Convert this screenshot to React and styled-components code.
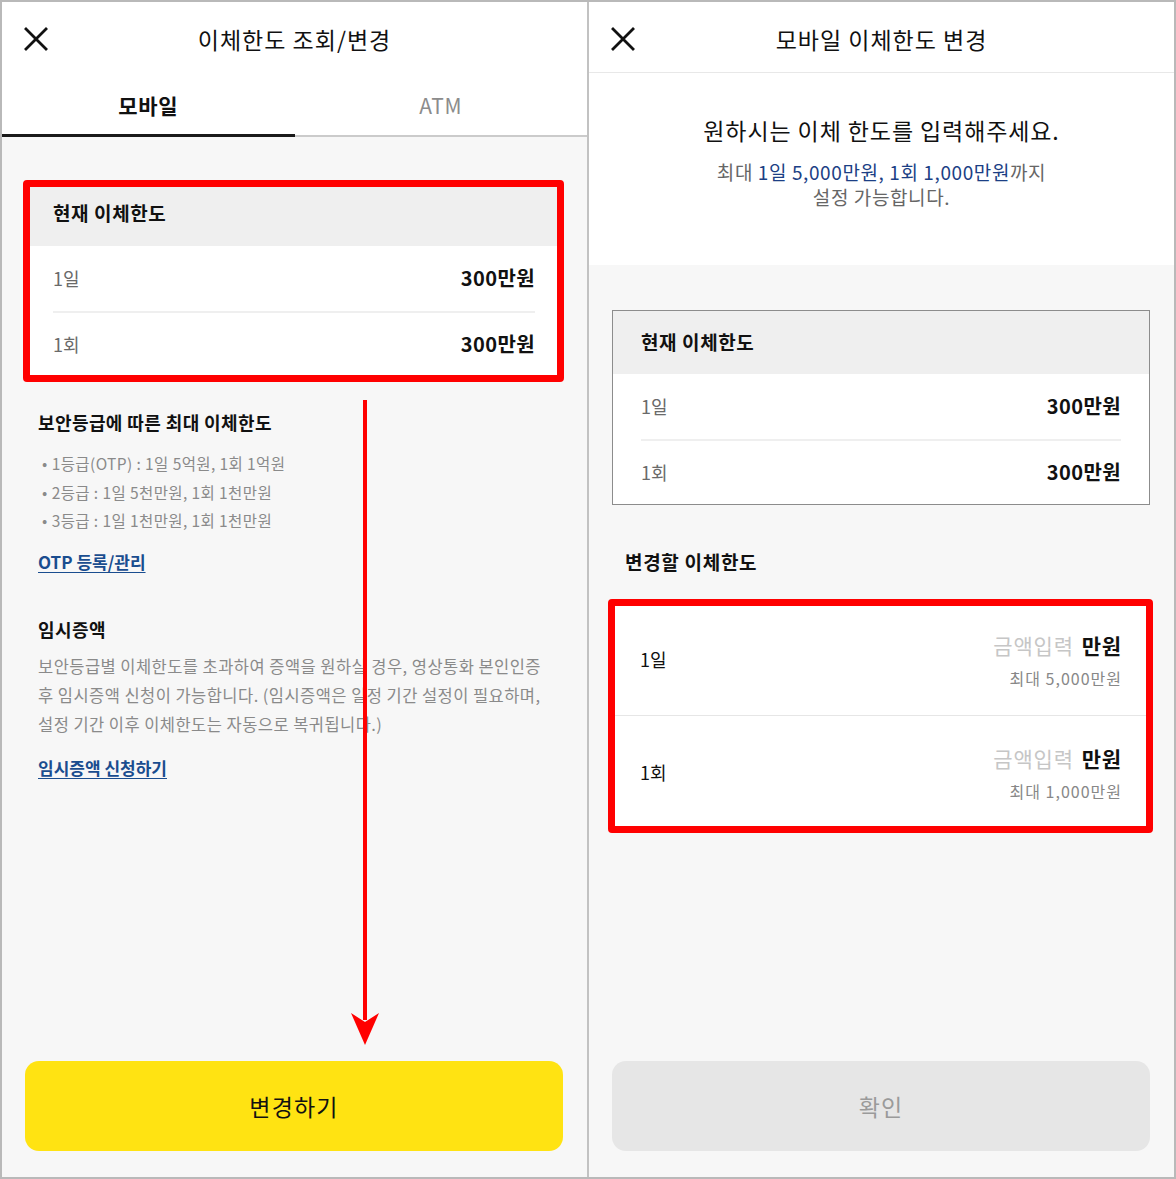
import styled, { createGlobalStyle } from "styled-components";

const GlobalStyle = createGlobalStyle`
    * { box-sizing: border-box; }
    body {
        margin: 0;
        font-family: "Noto Sans CJK KR", "Noto Sans", sans-serif;
        color: #111;
    }
`

const Frame = styled.div`
    display: flex;
    width: 1176px;
    height: 1179px;
    border: 2px solid #b9b9b9;
    background-color: #f7f7f7;
`

const Screen = styled.section`
    position: relative;
    flex: 1;
    display: flex;
    flex-direction: column;
    min-width: 0;

    & + & {
        border-left: 2px solid #c2c2c2;
    }
`

const Header = styled.header`
    display: grid;
    grid-template-columns: 60px 1fr 60px;
    align-items: center;
    height: ${(p) => (p.$line ? "71px" : "70px")};
    padding: 4px 0 0 21px;
    background-color: #fff;
    border-bottom: ${(p) => (p.$line ? "1px solid #e8e8e8" : "none")};
`

const CloseBtn = styled.button`
    display: flex;
    width: 26px;
    height: 26px;
    padding: 0;
    border: none;
    background: none;
`

const Title = styled.h1`
    margin: 0 0 0 -21px;
    text-align: center;
    font-size: 23px;
    font-weight: 400;
    letter-spacing: 1px;
    color: #111;
`

const Tabs = styled.nav`
    display: flex;
    height: 65px;
    background-color: #fff;
    border-bottom: 2px solid #cbcbcb;
`

const Tab = styled.div`
    flex: 1;
    display: flex;
    align-items: center;
    justify-content: center;
    padding-top: 4px;
    margin-bottom: -2px;
    font-size: 21px;
    letter-spacing: 0.6px;
    font-weight: ${(p) => (p.$active ? 700 : 400)};
    color: ${(p) => (p.$active ? "#111" : "#8c8c8c")};
    border-bottom: 3px solid ${(p) => (p.$active ? "#1a1a1a" : "transparent")};
`

const Body = styled.div`
    flex: 1;
    display: flex;
    flex-direction: column;
    padding: ${(p) => p.$top} 24px 26px 23px;
`

const Intro = styled.div`
    padding: 42px 0 56px;
    background-color: #fff;
    text-align: center;
`

const IntroTitle = styled.p`
    margin: 0;
    font-size: 23px;
    line-height: 31px;
    letter-spacing: 0.9px;
    color: #111;
`

const IntroSub = styled.p`
    margin: 13px 0 0;
    font-size: 19px;
    line-height: 25px;
    letter-spacing: 0.6px;
    color: #666;

    strong {
        font-weight: 400;
        color: #1c3f85;
    }
`

const Highlight = styled.div`
    position: relative;
    margin-top: ${(p) => p.$gap || "0"};

    &::after {
        content: "";
        position: absolute;
        inset: ${(p) => p.$inset};
        border: 7px solid #ff0000;
        border-radius: 4px;
        pointer-events: none;
    }
`

const Card = styled.div`
    background-color: #fff;
    border: ${(p) => (p.$bordered ? "1px solid #8c8c8c" : "none")};
`

const CardHead = styled.div`
    display: flex;
    align-items: center;
    height: ${(p) => (p.$bordered ? "63px" : "65px")};
    padding: 0 28px 2px;
    background-color: #efefef;
    font-size: 19px;
    font-weight: 700;
    letter-spacing: 0.6px;
`

const CardRow = styled.div`
    display: flex;
    align-items: center;
    justify-content: space-between;
    height: 65px;
    margin: 0 28px;
    padding-bottom: 2px;

    & + & {
        border-top: 2px solid #efefef;
    }
`

const RowLabel = styled.span`
    font-size: 18px;
    color: ${(p) => (p.$dark ? "#111" : "#6a6a6a")};
`

const RowValue = styled.span`
    font-size: 20px;
    font-weight: 700;
    letter-spacing: 0.4px;
    color: #111;
`

const SectionTitle = styled.h2`
    margin: ${(p) => p.$gap} 0 0 13px;
    font-size: ${(p) => p.$size || "18px"};
    line-height: 26px;
    font-weight: 700;
    letter-spacing: ${(p) => (p.$size ? "0.7px" : "0.4px")};
    color: #111;
`

const BulletList = styled.ul`
    margin: 14px 0 0 17px;
    padding: 0;
    list-style: none;
`

const Bullet = styled.li`
    font-size: 15.5px;
    line-height: 28.5px;
    letter-spacing: 0.4px;
    color: #8a8a8a;

    &::before {
        content: "•";
        margin-right: 4px;
        color: #8a8a8a;
    }
`

const TextLink = styled.a`
    align-self: flex-start;
    margin: ${(p) => p.$gap} 0 0 13px;
    font-size: 17px;
    line-height: 24px;
    font-weight: 700;
    letter-spacing: 0;
    color: #1a4d8f;
    text-decoration: underline;
    text-underline-offset: 3px;
`

const Paragraph = styled.p`
    margin: 10px 0 0 13px;
    font-size: 16.5px;
    line-height: 29px;
    letter-spacing: 0.45px;
    color: #8a8a8a;
    white-space: nowrap;
`

const InputRow = styled.div`
    display: flex;
    align-items: center;
    justify-content: space-between;
    height: 113px;
    padding: 0 28px;

    & + & {
        border-top: 1px solid #e6e6e6;
    }
`

const InputBox = styled.div`
    display: flex;
    flex-direction: column;
    align-items: flex-end;
    margin-top: 2px;
`

const AmountLine = styled.div`
    display: flex;
    align-items: baseline;
    gap: 8px;
    font-size: 21px;
    line-height: 28px;
    letter-spacing: 0.8px;
`

const Placeholder = styled.span`
    color: #c6c6c6;
`

const Unit = styled.span`
    font-weight: 700;
    color: #111;
`

const MaxNote = styled.span`
    margin-top: 8px;
    font-size: 16px;
    line-height: 22px;
    letter-spacing: 1px;
    color: #888;
`

const ActionButton = styled.button`
    margin-top: auto;
    height: 90px;
    border: none;
    border-radius: 14px;
    background-color: ${(p) => (p.$disabled ? "#e6e6e6" : "#ffe312")};
    color: ${(p) => (p.$disabled ? "#9a9a9a" : "#111")};
    font-family: inherit;
    font-size: 23px;
    letter-spacing: 1.2px;
`

const Arrow = styled.svg`
    position: absolute;
    left: 349px;
    top: 394px;
`

function CloseIcon() {
    return (
        <svg width="26" height="26" viewBox="0 0 26 26">
            <path d="M3 3 L23 23 M23 3 L3 23" stroke="#111" strokeWidth="2.8" strokeLinecap="square" />
        </svg>
    );
}

function CurrentLimit({ bordered }) {
    return (
        <Card $bordered={bordered}>
            <CardHead $bordered={bordered}>현재 이체한도</CardHead>
            <CardRow>
                <RowLabel>1일</RowLabel>
                <RowValue>300만원</RowValue>
            </CardRow>
            <CardRow>
                <RowLabel>1회</RowLabel>
                <RowValue>300만원</RowValue>
            </CardRow>
        </Card>
    );
}

export default function App() {
    const grades = [
        "1등급(OTP) : 1일 5억원, 1회 1억원",
        "2등급 : 1일 5천만원, 1회 1천만원",
        "3등급 : 1일 1천만원, 1회 1천만원",
    ];

    const inputs = [
        { label: "1일", max: "최대 5,000만원" },
        { label: "1회", max: "최대 1,000만원" },
    ];

    return (
        <>
            <GlobalStyle />
            <Frame>
                <Screen>
                    <Header>
                        <CloseBtn aria-label="닫기"><CloseIcon /></CloseBtn>
                        <Title>이체한도 조회/변경</Title>
                    </Header>
                    <Tabs>
                        <Tab $active>모바일</Tab>
                        <Tab>ATM</Tab>
                    </Tabs>
                    <Body $top="44px">
                        <Highlight $inset="-1px -1px -6px -2px">
                            <CurrentLimit />
                        </Highlight>

                        <SectionTitle $gap="33px">보안등급에 따른 최대 이체한도</SectionTitle>
                        <BulletList>
                            {grades.map((g) => (
                                <Bullet key={g}>{g}</Bullet>
                            ))}
                        </BulletList>
                        <TextLink href="#" $gap="15px">OTP 등록/관리</TextLink>

                        <SectionTitle $gap="42px">임시증액</SectionTitle>
                        <Paragraph>
                            보안등급별 이체한도를 초과하여 증액을 원하실 경우, 영상통화 본인인증
                            <br />
                            후 임시증액 신청이 가능합니다. (임시증액은 일정 기간 설정이 필요하며,
                            <br />
                            설정 기간 이후 이체한도는 자동으로 복귀됩니다.)
                        </Paragraph>
                        <TextLink href="#" $gap="17px">임시증액 신청하기</TextLink>

                        <ActionButton>변경하기</ActionButton>
                    </Body>
                    <Arrow width="28" height="652" viewBox="0 0 28 652">
                        <rect x="12" y="4" width="4" height="620" fill="#ff0000" />
                        <polygon points="0,617 14,626 28,617 14,649" fill="#ff0000" />
                    </Arrow>
                </Screen>

                <Screen>
                    <Header $line>
                        <CloseBtn aria-label="닫기"><CloseIcon /></CloseBtn>
                        <Title>모바일 이체한도 변경</Title>
                    </Header>
                    <Intro>
                        <IntroTitle>원하시는 이체 한도를 입력해주세요.</IntroTitle>
                        <IntroSub>
                            최대 <strong>1일 5,000만원, 1회 1,000만원</strong>까지
                            <br />
                            설정 가능합니다.
                        </IntroSub>
                    </Intro>
                    <Body $top="45px">
                        <CurrentLimit bordered />

                        <SectionTitle $gap="44px" $size="19px">변경할 이체한도</SectionTitle>

                        <Highlight $inset="-3px -3px -5px -4px" $gap="27px">
                            <Card>
                                {inputs.map((row) => (
                                    <InputRow key={row.label}>
                                        <RowLabel $dark>{row.label}</RowLabel>
                                        <InputBox>
                                            <AmountLine>
                                                <Placeholder>금액입력</Placeholder>
                                                <Unit>만원</Unit>
                                            </AmountLine>
                                            <MaxNote>{row.max}</MaxNote>
                                        </InputBox>
                                    </InputRow>
                                ))}
                            </Card>
                        </Highlight>

                        <ActionButton $disabled>확인</ActionButton>
                    </Body>
                </Screen>
            </Frame>
        </>
    );
}
